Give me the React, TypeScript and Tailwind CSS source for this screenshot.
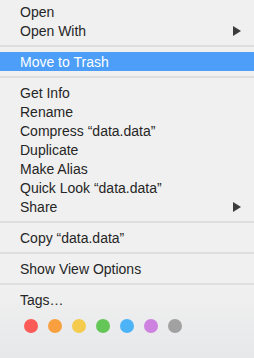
const tagColors = [
  "#fc5b57",
  "#f8a040",
  "#f5cb4d",
  "#64c656",
  "#4cb3f7",
  "#cd82e0",
  "#a1a1a1",
];

function Arrow() {
  return (
    <svg width="8" height="10" viewBox="0 0 8 10" className="mr-[13px]">
      <path d="M0 0 L8 5 L0 10 Z" fill="#3c3c3c" />
    </svg>
  );
}

function Item({
  label,
  submenu,
  active,
}: {
  label: string;
  submenu?: boolean;
  active?: boolean;
}) {
  return (
    <div
      className={
        "flex h-[19px] items-center justify-between pl-5 " +
        (active ? "bg-[#4c9ef8] text-white" : "text-[#262626]")
      }
    >
      <span className="leading-none">{label}</span>
      {submenu && <Arrow />}
    </div>
  );
}

function Separator() {
  return (
    <div className="py-[5px]">
      <div className="h-[2px] bg-[#dedede]" />
    </div>
  );
}

export default function App() {
  return (
    <div
      className="flex h-[358px] w-[254px] flex-col bg-gradient-to-b from-[#f0f0f0] from-80% to-[#e7e8ea] pt-[2px] text-[14px]"
      style={{ fontFamily: '"Liberation Sans", Arial, sans-serif' }}
    >
      <Item label="Open" />
      <Item label="Open With" submenu />
      <Separator />
      <Item label="Move to Trash" active />
      <Separator />
      <Item label="Get Info" />
      <Item label="Rename" />
      <Item label="Compress “data.data”" />
      <Item label="Duplicate" />
      <Item label="Make Alias" />
      <Item label="Quick Look “data.data”" />
      <Item label="Share" submenu />
      <Separator />
      <Item label="Copy “data.data”" />
      <Separator />
      <Item label="Show View Options" />
      <Separator />
      <Item label="Tags…" />
      <div className="mt-[10px] flex gap-[10px] pl-6">
        {tagColors.map((c) => (
          <div
            key={c}
            className="h-[14px] w-[14px] rounded-full"
            style={{ backgroundColor: c }}
          />
        ))}
      </div>
    </div>
  );
}
